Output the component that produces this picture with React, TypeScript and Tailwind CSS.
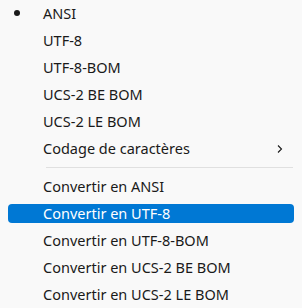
import React from "react";

type Item = { label: string; bullet?: boolean; sub?: boolean; active?: boolean };

const top: Item[] = [
  { label: "ANSI", bullet: true },
  { label: "UTF-8" },
  { label: "UTF-8-BOM" },
  { label: "UCS-2 BE BOM" },
  { label: "UCS-2 LE BOM" },
  { label: "Codage de caractères", sub: true },
];

const bottom: Item[] = [
  { label: "Convertir en ANSI" },
  { label: "Convertir en UTF-8", active: true },
  { label: "Convertir en UTF-8-BOM" },
  { label: "Convertir en UCS-2 BE BOM" },
  { label: "Convertir en UCS-2 LE BOM" },
];

function Row({ item }: { item: Item }) {
  return (
    <div className="h-[27px] flex items-center px-[8px]">
      <div
        className={
          "relative h-[19px] w-full rounded-[4px] flex items-center pl-[35px] pr-[8px] " +
          (item.active ? "bg-[#0078d4] text-white" : "text-[#1a1a1a]")
        }
      >
        {item.bullet && (
          <span className="absolute left-[6px] top-[6px] w-[6px] h-[6px] rounded-full bg-[#1a1a1a]" />
        )}
        <span className="flex-1 leading-none">{item.label}</span>
        {item.sub && (
          <svg width="8" height="10" viewBox="0 0 8 10" className="mr-[2px]">
            <path d="M2 1.5 L5.5 5 L2 8.5" fill="none" stroke="#1a1a1a" strokeWidth="1.1" />
          </svg>
        )}
      </div>
    </div>
  );
}

export default function App() {
  return (
    <div
      className="w-[302px] h-[308px] bg-[#f9f9f9] text-[14.5px] overflow-hidden"
      style={{ fontFamily: '"Noto Sans", "Open Sans", sans-serif' }}
    >
      {top.map((i) => (
        <Row key={i.label} item={i} />
      ))}
      <div className="h-[11px] flex items-center pl-[46px] pr-[9px]">
        <div className="h-px w-full bg-[#e0e0e0]" />
      </div>
      {bottom.map((i) => (
        <Row key={i.label} item={i} />
      ))}
    </div>
  );
}
